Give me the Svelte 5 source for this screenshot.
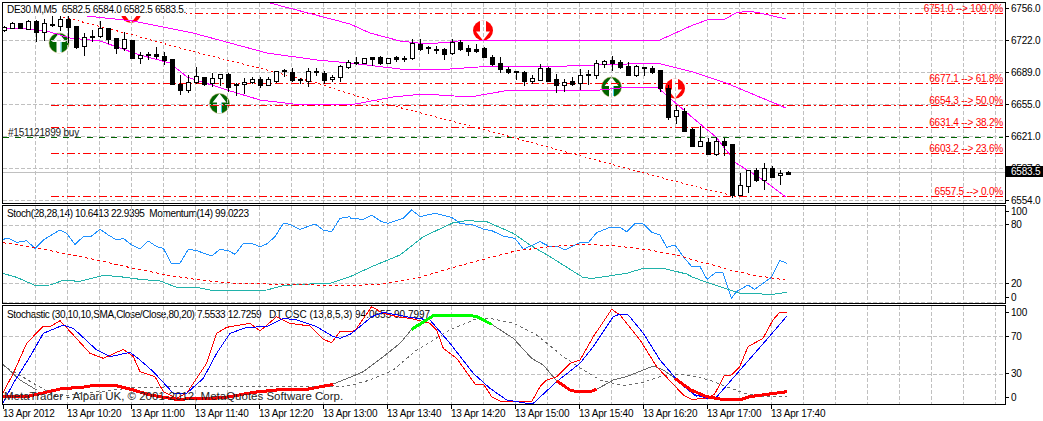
<script>
	// zoom-coordinate helpers: everything below was read off 3x crops
	const pts = (list, ox, oy) => list.map(([x, y]) => `${ox + x / 3},${oy + y / 3}`).join(' ');
	const join = (...parts) => parts.join(' ');

	// [bodyTop, bodyBottom, high, low, filled] in 3x pixels
	const rawCandles = [
		[80,90,78,92,0],[70,83,65,85,0],[70,83,70,83,1],[62,87,60,88,0],[63,97,60,122,1],[70,97,58,120,0],
		[72,76,48,77,1],[58,77,48,90,0],[58,80,48,125,1],[78,140,78,143,1],[110,139,100,165,0],[108,112,90,122,1],
		[85,107,62,112,0],[85,117,85,130,1],[114,143,114,158,1],[118,143,97,150,0],[120,173,120,175,1],[166,173,155,188,0],
		[161,166,155,177,0],[162,167,140,175,1],[168,179,155,192,1],[178,253,178,253,1],[252,269,225,282,1],[247,269,225,276,0],
		[229,247,200,250,0],[232,251,232,255,1],[234,249,220,258,0],[223,235,223,255,0],[222,260,220,272,1],[252,256,250,285,1],
		[247,253,235,280,0],[238,247,230,250,0],[238,254,232,260,1],[238,254,232,256,0],[214,243,212,245,0],[210,214,207,228,1],
		[216,240,205,243,1],[237,241,235,248,1],[214,242,205,258,0],[213,217,205,225,1],[219,240,213,250,1],[231,238,226,243,0],
		[199,232,195,242,0],[187,200,180,205,0],[187,189,172,192,1],[175,190,175,190,0],[172,176,172,195,1],[172,188,168,191,1],
		[175,190,175,190,0],[171,176,167,182,1],[173,175,168,182,1],[130,173,118,178,0],[133,147,118,150,1],[141,145,138,158,1],
		[147,149,138,158,1],[148,161,145,177,1],[127,160,117,162,0],[126,147,120,150,1],[145,152,135,165,1],[148,152,132,156,1],
		[145,170,140,171,1],[171,192,165,195,1],[190,206,170,215,1],[206,216,200,220,1],[214,217,212,237,1],[216,243,212,254,1],
		[235,242,225,250,0],[205,239,193,240,0],[205,242,200,244,1],[238,255,222,276,1],[245,254,238,272,0],[244,251,232,255,1],
		[226,250,207,267,0],[222,226,210,252,1],[190,224,180,234,0],[184,193,180,200,0],[181,188,168,210,1],[187,201,180,205,1],
		[198,224,185,225,1],[199,224,196,227,0],[202,205,202,225,1],[205,215,197,220,1],[210,264,210,272,1],[264,352,255,356,1],
		[331,349,315,370,0],[333,392,325,393,1],[388,437,385,437,1],[424,437,378,437,0],[426,461,415,462,1],[424,461,410,465,0],
		[424,434,415,465,1],[432,585,432,590,1],[556,585,518,585,0],[511,557,510,575,0],[511,540,505,543,1],[505,540,490,567,0],
		[504,530,498,532,1],[520,526,510,552,0],[516,521,513,522,1]
	];
	const candles = rawCandles.map(([t, b, h, l, f], i) => ({
		x: 4 + 8 * i,
		top: Math.round(t / 3),
		bottom: Math.round(b / 3),
		high: Math.round(h / 3),
		low: Math.round(l / 3),
		filled: !!f
	}));

	const bandTop = '270,3 350,24 370,33 400,41 427,44 450,42 467,40 527,40 660,40 693,25 710,19 725,19 736,13 748,11 760,13 786,19';
	const bandMid = '87,16 133,21 193,33 267,53 317,60 350,63 400,69 450,69 493,66 567,66 657,63 693,72 726,83 786,108';
	const bandLow = '5,28 30,29 50,32 70,38 100,41 140,55 170,63 187,77 227,90 260,100 293,104 350,105 393,97 423,94 470,97 510,90 583,90 590,91 630,87 657,87 693,118 716,137 736,163 763,180 786,197';
	const trend = '63,17 133,35 187,50 267,70 317,83 350,94 390,105 478,128 570,153 640,172 693,186 730,195';

	const fibs = [
		{ y: 13, from: 51, label: '6751.0 --> 100.0%', ly: 8 },
		{ y: 83, from: 51, label: '6677.1 --> 61.8%', ly: 78 },
		{ y: 105, from: 51, label: '6654.3 --> 50.0%', ly: 100 },
		{ y: 127, from: 51, label: '6631.4 --> 38.2%', ly: 122 },
		{ y: 153, from: 51, label: '6603.2 --> 23.6%', ly: 148 },
		{ y: 196, from: 51, label: '6557.5 --> 0.0%', ly: 191 }
	];

	const buys = [[59, 43], [219.5, 103.5], [611.5, 87]];
	const sells = [[131, 13], [483, 30.5], [675, 88.5]];

	const gridX = Array.from({ length: 31 }, (_, i) => 35 + 32 * i);

	const mainScale = [[8, '6756.0'], [40, '6722.0'], [72, '6689.0'], [104, '6655.0'], [136, '6621.0'], [168, '6587.0'], [200, '6554.0']];
	const stochScale = [[211, '100'], [224, '80'], [283, '20'], [297, '0']];
	const oscScale = [[312, '100'], [336, '70'], [373, '30'], [397, '0']];

	const blue = join(
		pts([[8,118],[25,115],[50,127],[80,122],[105,145],[130,120],[180,90],[200,100],[225,133],[250,110],[275,108],[300,88],[325,105],[350,120],[370,115],[395,135],[420,147],[445,123],[470,140],[490,145],[515,192],[540,190],[565,148],[590,152],[635,168],[660,148],[685,152],[705,163],[730,130],[755,130],[780,140],[800,132],[825,110],[850,70],[870,73],[900,88],[945,72],[970,90],[995,95],[1020,55],[1050,50]], 0, 200),
		pts([[0,55],[40,58],[65,45],[95,65],[115,70],[160,55],[185,30],[210,50],[255,40],[305,52],[330,70],[370,75],[400,87],[425,92],[460,108],[495,115],[520,148],[570,125],[595,138],[620,138],[645,150],[690,128],[715,128],[740,98],[780,82],[810,82],[830,95],[855,70],[880,72],[905,97],[930,105],[950,142],[975,135],[1000,170],[1025,200]], 350, 200),
		pts([[0,200],[20,198],[42,238],[70,216],[90,218],[115,295],[130,275],[165,255],[185,268],[235,232],[260,181],[282,190]], 693, 200)
	);
	const stochSignal = join(
		pts([[8,128],[100,142],[300,182],[400,205],[500,225],[600,240],[700,250],[800,252],[1050,257]], 0, 200),
		pts([[100,252],[200,235],[300,205],[400,178],[500,152],[600,140],[700,133],[800,138],[900,150],[1000,170]], 350, 200),
		pts([[0,180],[50,192],[110,210],[180,225],[282,241]], 693, 200)
	);
	const teal = join(
		pts([[8,220],[50,232],[105,256],[150,255],[190,241],[240,244],[310,226],[360,230],[420,238],[480,243],[530,262],[590,262],[630,270],[700,273],[800,270],[850,257],[900,253],[990,250],[1050,230]], 0, 200),
		pts([[70,198],[150,165],[220,110],[310,68],[350,62],[410,65],[490,100],[540,135],[600,170],[700,233],[730,235],[830,220],[880,205],[940,205],[1010,222]], 350, 200),
		pts([[0,232],[50,250],[110,270],[140,280],[240,283],[282,277]], 693, 200)
	);

	const oscRed = join(
		pts([[8,580],[40,520],[80,430],[130,378],[150,380],[180,362],[220,405],[270,460],[310,475],[370,448],[400,470],[420,515],[465,530],[490,575],[530,595],[560,580],[620,490],[650,400],[680,382],[750,370],[780,393],[830,350],[870,370],[930,378],[970,418],[995,428],[1020,395],[1050,395]], 0, 200),
		pts([[15,392],[65,320],[100,340],[150,352],[180,355],[240,370],[260,390],[280,445],[320,475],[375,552],[400,552],[425,590],[450,603],[490,603],[545,605],[570,560],[590,540],[620,530],[660,490],[690,480],[730,410],[785,328],[810,345],[870,420],[920,500],[1000,585],[1030,600]], 350, 200),
		pts([[0,598],[40,595],[65,582],[95,525],[115,525],[140,500],[165,440],[210,415],[240,360],[260,337],[282,337]], 693, 200)
	);
	const oscBlue = join(
		pts([[8,610],[40,550],[90,470],[130,400],[190,375],[220,385],[290,450],[330,470],[390,457],[420,480],[460,515],[520,580],[560,580],[610,535],[650,460],[690,400],[740,382],[800,380],[850,355],[890,360],[950,380],[1000,410],[1020,415],[1050,403]], 0, 200),
		pts([[20,388],[65,350],[100,337],[180,352],[240,360],[300,430],[370,520],[420,565],[470,600],[530,610],[550,610],[620,545],[690,490],[730,440],[790,350],[810,342],[835,345],[880,400],[930,480],[990,550],[1040,590]], 350, 200),
		pts([[0,582],[42,595],[70,592],[150,500],[220,420],[282,348]], 693, 200)
	);
	const dtGray = [
		pts([[8,492],[60,540],[110,570]], 0, 200),
		pts([[1000,552],[1050,532]], 0, 200) + ' ' + pts([[40,515],[100,470],[150,430],[185,388]], 350, 200),
		pts([[425,373],[490,415],[545,475],[580,495],[620,543]], 350, 200),
		pts([[740,568],[790,540],[830,530],[880,510],[910,498],[940,510],[975,535]], 350, 200)
	];
	const dtThick = [
		pts([[8,590],[80,590],[190,565],[240,563],[290,555],[340,555],[400,570],[450,585],[530,598],[580,596],[640,595],[690,590],[760,577],[850,568],[920,568],[1000,553]], 0, 200),
		pts([[620,543],[660,570],[680,575],[720,575],[740,568]], 350, 200),
		pts([[975,535],[1029,575]], 350, 200) + ' ' + pts([[0,572],[40,590],[100,600],[145,598],[170,590],[230,582],[282,575]], 693, 200)
	];
	const dtGreen = pts([[185,388],[250,347],[300,345],[350,345],[380,350],[425,373]], 350, 200);
	const dtSignal = join(
		pts([[8,495],[100,550],[170,590]], 0, 200),
		pts([[400,563],[540,560],[1000,560]], 0, 200),
		pts([[0,557],[60,540],[130,510],[200,450],[300,390],[380,356],[420,355],[490,370],[560,405],[640,470],[700,510],[750,540],[820,557],[870,550],[930,530],[970,522],[1029,527]], 350, 200),
		pts([[0,529],[50,540],[100,560],[150,578],[200,590],[282,590]], 693, 200)
	);

	const times = ['13 Apr 2012', '13 Apr 10:20', '13 Apr 11:00', '13 Apr 11:40', '13 Apr 12:20', '13 Apr 13:00', '13 Apr 13:40', '13 Apr 14:20', '13 Apr 15:00', '13 Apr 15:40', '13 Apr 16:20', '13 Apr 17:00', '13 Apr 17:40'];
</script>

{#snippet grid(lines, y0, y1)}
	{#each gridX as x}
		<line class="grid" x1={x + 0.5} x2={x + 0.5} y1={y0} y2={y1} />
	{/each}
	{#each lines as y}
		<line class="grid" x1="3" x2="1005" y1={y + 0.5} y2={y + 0.5} />
	{/each}
{/snippet}

{#snippet scale(rows, y0, h, tag)}
	<svg class="scale" width="37" height={h} viewBox="1006 {y0} 37 {h}">
		{#each rows as [y, label]}
			<line class="tick" x1="1006" x2="1009" y1={y + 0.5} y2={y + 0.5} />
			{#if !tag || Math.abs(y - tag.y) > 6}
				<text x="1011" y={y + 4}>{label}</text>
			{/if}
		{/each}
		{#if tag}
			<text class="under" x="1011" y={tag.y + 1}>{tag.hidden}</text>
			<rect x="1006" y={tag.y - 5} width="37" height="11" fill="#000" />
			<text class="tag" x="1011" y={tag.y + 4}>{tag.label}</text>
		{/if}
	</svg>
{/snippet}

<div class="terminal">
	<div class="row">
		<div class="plot main">
			<div class="legend opaque">DE30.M,M5&nbsp; 6582.5 6584.0 6582.5 6583.5.</div>
			<svg width="1002" height="200" viewBox="3 3 1002 200">
				{#each buys as [x, y]}
					<g transform="translate({x} {y})">
						<circle r="10" fill="#006400" stroke="#b9a75a" stroke-width="0.5" />
						<path d="M0-10 7-1 2.5-1 2.5 10-2.5 10-2.5-1-7-1Z" fill="#fff" />
						<line x1="2" x2="2" y1="-1" y2="9" stroke="#40d0e0" />
					</g>
				{/each}
				{#each sells as [x, y]}
					<g transform="translate({x} {y})">
						<circle r="10" fill="#f00" />
						<path d="M0 10 7 1 3 1 3-10-3-10-3 1-7 1Z" fill="#fff" />
					</g>
				{/each}
				{@render grid([8, 40, 72, 104, 136, 168, 200], 3, 203)}
				<line class="price" x1="3" x2="1005" y1="172.5" y2="172.5" />
				{#each fibs as f}
					<line class="fib" x1={f.from} x2="1003" y1={f.y + 0.5} y2={f.y + 0.5} />
					<text class="fib-label" x="1003" y={f.ly + 4} text-anchor="end">{f.label}</text>
				{/each}
				<line class="order" x1="3" x2="1003" y1="137.5" y2="137.5" />
				<text class="order-label" x="8" y="136">#151121899 buy</text>
				<polyline class="trend" points={trend} />
				<polyline class="band" points={bandTop} />
				<polyline class="band" points={bandMid} />
				<polyline class="band" points={bandLow} />
				{#each candles as c}
					<line class="wick" x1={c.x + 0.5} x2={c.x + 0.5} y1={c.high} y2={c.low + 1} />
					<rect class="body" class:filled={c.filled} x={c.x - 1.5} y={c.top + 0.5} width="4" height={Math.max(c.bottom - c.top, 1)} />
				{/each}
			</svg>
		</div>
		{@render scale(mainScale, 2, 202, { y: 171, label: '6583.5', hidden: '6587.0' })}
	</div>

	<div class="row second">
		<div class="plot stoch">
			<div class="legend">Stoch(28,28,14) 10.6413 22.9395&nbsp; Momentum(14) 99.0223</div>
			<svg width="1002" height="97" viewBox="3 206 1002 97">
				{@render grid([225, 283, 302], 206, 303)}
				<polyline class="s-blue" points={blue} />
				<polyline class="s-teal" points={teal} />
				<polyline class="s-red" points={stochSignal} />
			</svg>
		</div>
		{@render scale(stochScale, 205, 99)}
	</div>

	<div class="row second">
		<div class="plot osc">
			<div class="legend">Stochastic (30,10,10,SMA,Close/Close,80,20) 7.5533 12.7259&nbsp; <span class="dt">DT OSC (13,8,5,3) 94.0655 90.7997</span></div>
			<svg width="1002" height="98" viewBox="3 306 1002 98">
				{@render grid([336, 374], 306, 404)}
				<polyline class="o-signal" points={dtSignal} />
				{#each dtGray as p}
					<polyline class="o-gray" points={p} />
				{/each}
				<polyline class="o-red" points={oscRed} />
				<polyline class="o-blue" points={oscBlue} />
				{#each dtThick as p}
					<polyline class="o-thick" points={p} />
				{/each}
				<polyline class="o-green" points={dtGreen} />
			</svg>
			<div class="copyright">MetaTrader - Alpari UK, © 2001-2012, MetaQuotes Software Corp.</div>
		</div>
		{@render scale(oscScale, 305, 100)}
	</div>

	<div class="axis">
		{#each times as t}
			<div class="time">{t}</div>
		{/each}
	</div>
</div>

<style>
	:global(body) {
		margin: 0;
		background: #fff;
	}

	.terminal {
		width: 1043px;
		height: 421px;
		overflow: hidden;
		padding: 2px 0 0 2px;
		box-sizing: border-box;
		background: #fff;
		font: 10px "Liberation Sans", sans-serif;
		letter-spacing: -0.2px;
		color: #000;
	}

	.row {
		display: flex;
	}

	.row.second {
		margin-top: 1px;
	}

	.plot {
		position: relative;
		width: 1004px;
		box-sizing: border-box;
		border: 1px solid #000;
		overflow: hidden;
	}

	.main { height: 202px; }
	.stoch { height: 99px; }
	.osc { height: 100px; }

	.plot svg {
		position: relative;
		display: block;
	}

	.legend {
		position: absolute;
		left: 4px;
		top: 2px;
		line-height: 12px;
		white-space: nowrap;
		letter-spacing: -0.37px;
	}

	.legend.opaque {
		z-index: 1;
		top: 0;
		left: 0;
		width: 183px;
		height: 13px;
		padding: 1px 0 0 4px;
		box-sizing: border-box;
		background: #fff;
		letter-spacing: -0.33px;
	}

	.osc .legend {
		top: 3px;
	}

	.dt {
		margin-left: 3px;
		letter-spacing: 0;
	}

	.copyright {
		position: absolute;
		left: 1px;
		bottom: 1px;
		z-index: 1;
		font-size: 11.5px;
		letter-spacing: 0;
		line-height: 14px;
		white-space: nowrap;
		color: #222;
	}

	.scale {
		display: block;
		flex: none;
		overflow: visible;
	}

	.scale text {
		font: inherit;
		letter-spacing: -0.2px;
	}

	.scale .tag {
		fill: #fff;
	}

	.tick {
		stroke: #000;
		shape-rendering: crispEdges;
	}

	.axis {
		display: flex;
	}

	.time {
		position: relative;
		width: 64px;
		flex: none;
		padding: 3px 0 0 1px;
		box-sizing: border-box;
		height: 16px;
		line-height: 12px;
		white-space: nowrap;
	}

	.time::before {
		content: "";
		position: absolute;
		left: 1px;
		top: 0;
		width: 1px;
		height: 4px;
		background: #000;
	}

	polyline {
		fill: none;
		shape-rendering: crispEdges;
		stroke-linejoin: round;
	}

	.grid {
		stroke: #c0c0c0;
		stroke-dasharray: 4 2;
		shape-rendering: crispEdges;
	}

	.price {
		stroke: #c0c0c0;
		shape-rendering: crispEdges;
	}

	.fib {
		stroke: #f00;
		stroke-dasharray: 8 3 2 3;
		shape-rendering: crispEdges;
	}

	.fib-label {
		fill: #f00;
		font: inherit;
	}

	.order {
		stroke: #006400;
		stroke-dasharray: 6 6;
		shape-rendering: crispEdges;
	}

	.order-label {
		fill: #222;
		font: inherit;
	}

	.trend {
		stroke: #f00;
		stroke-dasharray: 2 3;
	}

	.band {
		stroke: #f0f;
	}

	.wick {
		stroke: #000;
		shape-rendering: crispEdges;
	}

	.body {
		fill: #fff;
		stroke: #000;
		shape-rendering: crispEdges;
	}

	.body.filled {
		fill: #000;
	}

	.s-blue { stroke: #1e90ff; }
	.s-teal { stroke: #20b2aa; }
	.s-red { stroke: #f00; stroke-dasharray: 3 3; }
	.o-signal { stroke: #696969; stroke-dasharray: 3 3; }
	.o-gray { stroke: #696969; }
	.o-red { stroke: #f00; }
	.o-blue { stroke: #00f; }
	.o-thick { stroke: #f00; stroke-width: 3; }
	.o-green { stroke: #0f0; stroke-width: 3; }
</style>
